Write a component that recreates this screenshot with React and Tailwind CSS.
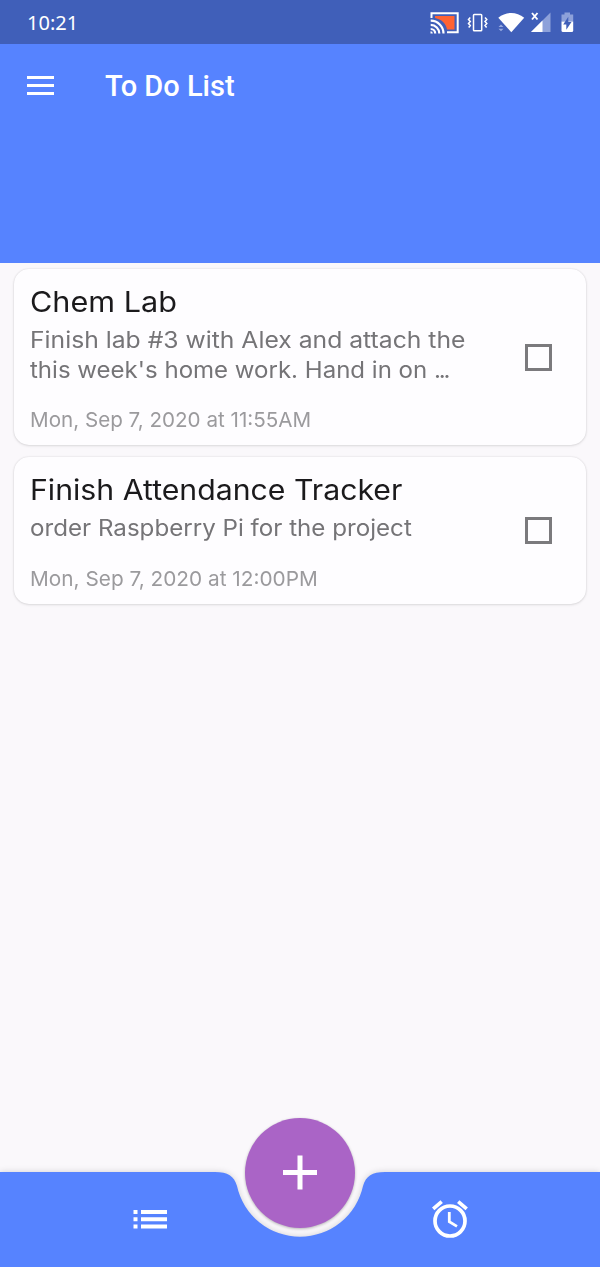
const tasks = [
  {
    title: 'Chem Lab',
    titleStretch: 'scale-x-[1.093]',
    lines: [
      { text: 'Finish lab #3 with Alex and attach the', stretch: 'scale-x-[1.098]' },
      { text: "this week's home work. Hand in on ", stretch: 'scale-x-[1.068]', truncated: true },
    ],
    date: 'Mon, Sep 7, 2020 at 11:55AM',
    dateStretch: 'scale-x-[1.006]',
    height: 'h-[176px]',
  },
  {
    title: 'Finish Attendance Tracker',
    titleStretch: 'scale-x-[1.08]',
    lines: [{ text: 'order Raspberry Pi for the project', stretch: 'scale-x-[1.073]' }],
    date: 'Mon, Sep 7, 2020 at 12:00PM',
    dateStretch: 'scale-x-[1.015]',
    height: 'h-[147px]',
  },
];

function StatusIcons() {
  return (
    <svg className="block h-[44px] w-[180px]" viewBox="420 0 180 44" fill="none">
      {/* screen cast */}
      <path d="M435 16H454.500V29.500H447C446 23 441.500 19.500 435 18Z" fill="#ff6333" />
      <path d="M431.500 18V13.300H457.700V32.300H447" stroke="#fff" strokeWidth="2" />
      <path d="M430.700 20.700A12.800 12.800 0 0 1 443.500 33.500M430.700 24.900A8.600 8.600 0 0 1 439.300 33.500M430.700 29A4.500 4.500 0 0 1 435.200 33.500" stroke="#fff" strokeWidth="2.200" />
      <path d="M430.500 31.200A2.300 2.300 0 0 1 432.800 33.500H430.500Z" fill="#fff" />
      {/* vibrate */}
      <rect x="473.500" y="14.500" width="8.200" height="16.200" rx="0.800" stroke="#fff" strokeWidth="1.500" />
      <path d="M470.300 17.500L468.500 19.500L470.300 21.500L468.500 23.500L470.300 25.500L468.700 27.500M485 17.500L486.800 19.500L485 21.500L486.800 23.500L485 25.500L486.600 27.500" stroke="#fff" strokeWidth="1.500" />
      {/* wifi */}
      <path d="M498.300 17.700C506 11.300 516.500 11.300 524.200 17.700L511.300 32.200Z" fill="#fff" />
      <path d="M498.500 27L501 24.500L503.500 27ZM498.500 28.700L501 31.200L503.500 28.700Z" fill="#96a9df" />
      {/* cell signal */}
      <path d="M532 13L537.500 19.500M537.500 13L532 19.500" stroke="#fff" strokeWidth="1.900" />
      <path d="M531 32L550.500 12.500V32Z" fill="#8da1da" />
      <path d="M531 32L542.500 20.500V32Z" fill="#fff" />
      {/* battery */}
      <path d="M564.500 12.500H570V14.500H573.200V21.500H561.500V14.500H564.500Z" fill="#8da1da" />
      <path d="M561.500 21.500H573.200V30.500Q573.200 32 571.700 32H563Q561.500 32 561.500 30.500Z" fill="#fff" />
      <path d="M568.300 16.800L563.200 24.500H566.300V29.800L571.500 22H568.300Z" fill="#405fb9" />
    </svg>
  );
}

function TaskCard({ task }) {
  return (
    <article
      className={`flex items-center rounded-[15px] bg-[#fefdff] pl-[15.500px] shadow-[0_1px_3px_rgba(0,0,0,0.10),0_0_2px_rgba(0,0,0,0.12)] ${task.height}`}
    >
      <div className="flex flex-1 flex-col items-start self-stretch pt-[14px] whitespace-nowrap">
        <h2 className={`origin-left text-[28px] leading-[38px] font-normal text-[#1b1a1c] ${task.titleStretch}`}>{task.title}</h2>
        <div className="mt-[4px] flex flex-col items-start text-[22.500px] leading-[29.500px] text-[#757477]">
          {task.lines.map((line) => (
            <p key={line.text} className={`origin-left ${line.stretch}`}>
              {line.text}
              {line.truncated && <span className="tracking-[-2px]">...</span>}
            </p>
          ))}
        </div>
        <p className={`mt-[23px] origin-left text-[20.500px] leading-[26px] text-[#9b9a9d] ${task.dateStretch}`}>{task.date}</p>
      </div>
      <button aria-label="Complete task" className="mr-[34px] size-[27px] border-[3px] border-[#7b7a7d]" />
    </article>
  );
}

export default function App() {
  return (
    <div className="flex h-[1267px] w-[600px] flex-col overflow-hidden bg-[#faf8fb] font-['Inter',sans-serif]">
      <div className="flex h-[44px] shrink-0 items-center justify-between bg-[#405fb9] pl-[27px]">
        <span className="pt-[2px] font-['Noto_Sans',sans-serif] text-[20px] leading-[28px] text-white">10:21</span>
        <StatusIcons />
      </div>
      <header className="flex h-[219px] shrink-0 items-start bg-[#5683ff] pl-[27px] text-white">
        <button aria-label="Menu" className="mt-[32px] flex h-[19px] w-[27px] flex-col justify-between">
          <span className="h-[3px] w-full bg-white" />
          <span className="h-[3px] w-full bg-white" />
          <span className="h-[3px] w-full bg-white" />
        </button>
        <h1 className="mt-[24px] ml-[51px] font-['Roboto',sans-serif] text-[29px] leading-[36px] font-medium whitespace-nowrap">To Do List</h1>
      </header>
      <main className="flex flex-1 flex-col gap-[12px] px-[14px] pt-[6px]">
        {tasks.map((task) => (
          <TaskCard key={task.title} task={task} />
        ))}
      </main>
      <nav className="relative h-[95px] shrink-0">
        <svg className="absolute inset-0 overflow-visible drop-shadow-[0_0_3px_rgba(0,0,0,0.16)]" width="600" height="95" viewBox="0 0 600 95">
          <path d="M0 0H215C228 0 234 4 237 14A64.500 64.500 0 0 0 363 14C366 4 372 0 385 0H600V95H0Z" fill="#5683ff" />
        </svg>
        <div className="relative flex h-full items-center justify-around pb-[2px] pl-[1px] text-white">
          <button aria-label="Tasks">
            <svg width="36" height="24" viewBox="0 0 36 24" fill="currentColor">
              <path d="M1.500 3h4v4h-4zM9 3h26v4H9zM1.500 10.300h4v4h-4zM9 10.300h26v4H9zM1.500 17.500h4v4h-4zM9 17.500h26v4H9z" />
            </svg>
          </button>
          <button aria-label="Reminders">
            <svg width="40" height="40" viewBox="-0.700 0 40 40" fill="none" stroke="currentColor">
              <circle cx="20.300" cy="22" r="15" strokeWidth="3.700" />
              <path d="M3.500 9.800L12 2.700M28.500 2.700L37 9.800" strokeWidth="3.700" />
              <path d="M19.600 13V22.800L27.300 27.400" strokeWidth="2.800" />
            </svg>
          </button>
        </div>
        <button
          aria-label="Add task"
          className="absolute top-[-54.500px] left-[245px] flex size-[110px] items-center justify-center rounded-full bg-[#aa64c6] shadow-[0_1px_3px_rgba(0,0,0,0.28)]"
        >
          <svg width="36" height="36" viewBox="0 0.500 36 36" fill="#fff">
            <path d="M15.500 1h5v14.500H35v5H20.500V35h-5V20.500H1v-5h14.500z" />
          </svg>
        </button>
      </nav>
    </div>
  );
}
